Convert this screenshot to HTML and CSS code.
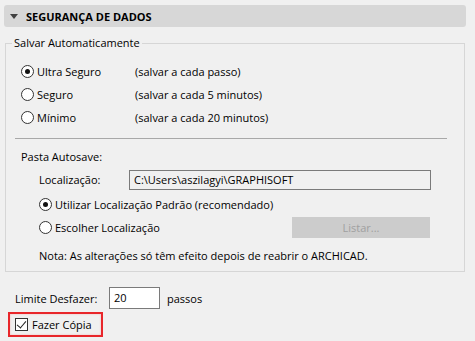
FILE: index.html
```html
<!DOCTYPE html>
<html lang="pt">
<head>
    <meta charset="UTF-8">
    <title>Segurança de Dados</title>
    <link rel="stylesheet" href="styles.css">
</head>
<body>
    <div class="header">
        <span class="arrow"></span>
        <span class="title">SEGURANÇA DE DADOS</span>
    </div>

    <fieldset class="group">
        <legend>Salvar Automaticamente</legend>
        <div class="level">
            <span class="radio checked"></span><span class="level-name">Ultra Seguro</span>
            <span>(salvar a cada passo)</span>
        </div>
        <div class="level">
            <span class="radio"></span><span class="level-name">Seguro</span>
            <span>(salvar a cada 5 minutos)</span>
        </div>
        <div class="level">
            <span class="radio"></span><span class="level-name">Mínimo</span>
            <span>(salvar a cada 20 minutos)</span>
        </div>
        <hr class="sep">
        <div class="subtitle">Pasta Autosave:</div>
        <div class="indent location">
            <span class="loc-label">Localização:</span>
            <span class="path">C:\Users\aszilagyi\GRAPHISOFT</span>
        </div>
        <div class="indent option first-option">
            <span class="radio checked"></span><span>Utilizar Localização Padrão (recomendado)</span>
        </div>
        <div class="indent option">
            <span class="radio"></span><span class="grow">Escolher Localização</span>
            <span class="button disabled">Listar...</span>
        </div>
        <div class="indent note">Nota: As alterações só têm efeito depois de reabrir o ARCHICAD.</div>
    </fieldset>

    <div class="undo">
        <span class="undo-label">Limite Desfazer:</span>
        <span class="number">20</span>
        <span>passos</span>
    </div>

    <div class="backup">
        <span class="check"></span><span>Fazer Cópia</span>
    </div>
</body>
</html>
```

FILE: styles.css
```css
body {
    margin: 0;
    background-color: #f0f0f0;
    font-family: "Open Sans", "Noto Sans", sans-serif;
    font-size: 11px;
    color: #000;
    width: 475px;
    height: 341px;
    overflow: hidden;
}
.header {
    margin: 5px 9px 0 4px;
    height: 22px;
    background-color: #d7d7d7;
    border-radius: 3px;
    display: flex;
    align-items: center;
    padding-left: 6px;
}
.arrow {
    width: 0;
    height: 0;
    border-left: 4px solid transparent;
    border-right: 4px solid transparent;
    border-top: 5px solid #404040;
    margin-right: 8px;
}
.title {
    font-weight: bold;
    font-size: 11px;
}
.group {
    margin: 8px 10px 0 5px;
    padding: 0 0 4px 0;
    border: 1px solid #d6d6d6;
    min-width: 0;
}
.group legend {
    margin-left: 6px;
    padding: 0 2px;
    line-height: 16px;
}
.level {
    display: flex;
    align-items: center;
    height: 23px;
    padding-left: 15px;
}
.level:first-of-type {
    margin-top: 9px;
}
.level-name {
    width: 98px;
}
.radio {
    width: 11px;
    height: 11px;
    border: 1px solid #333;
    border-radius: 50%;
    background-color: #fff;
    box-sizing: content-box;
    margin-right: 3px;
    position: relative;
    flex: none;
}
.radio.checked::after {
    content: "";
    position: absolute;
    left: 3px;
    top: 3px;
    width: 5px;
    height: 5px;
    border-radius: 50%;
    background-color: #111;
}
.sep {
    margin: 9px 17px 0 9px;
    border: 0;
    border-top: 1px solid #a8a8a8;
}
.subtitle {
    padding-left: 15px;
    height: 23px;
    line-height: 23px;
    margin-top: 6px;
}
.indent {
    padding-left: 33px;
}
.location {
    display: flex;
    align-items: center;
    height: 23px;
}
.loc-label {
    width: 90px;
}
.path {
    width: 296px;
    height: 18px;
    line-height: 18px;
    border: 1px solid #7a7a7a;
    padding-left: 4px;
}
.option {
    display: flex;
    align-items: center;
    height: 23px;
}
.first-option {
    margin-top: 2px;
}
.grow {
    flex: 1;
}
.button {
    width: 138px;
    height: 21px;
    line-height: 21px;
    text-align: center;
    margin-right: 34px;
}
.disabled {
    background-color: #cccccc;
    color: #a0a0a0;
}
.note {
    height: 23px;
    line-height: 23px;
    margin-top: 5px;
}
.undo {
    display: flex;
    align-items: center;
    margin-top: 15px;
    padding-left: 15px;
    height: 22px;
}
.undo-label {
    width: 94px;
}
.number {
    width: 45px;
    height: 20px;
    line-height: 20px;
    border: 1px solid #7a7a7a;
    background-color: #fff;
    padding-left: 4px;
    margin-right: 7px;
}
.backup {
    display: inline-flex;
    align-items: center;
    margin: 3px 0 0 8px;
    width: 86px;
    height: 21px;
    border: 2px solid #e8262a;
    box-shadow: inset 0 0 2px #f2b0b0;
    padding-left: 5px;
    box-sizing: content-box;
}
.check {
    width: 11px;
    height: 11px;
    border: 1px solid #333;
    background-color: #fff;
    margin-right: 4px;
    position: relative;
}
.check::after {
    content: "";
    position: absolute;
    left: 3px;
    top: 0;
    width: 4px;
    height: 8px;
    border-right: 1px solid #222;
    border-bottom: 1px solid #222;
    transform: rotate(40deg);
}
```
